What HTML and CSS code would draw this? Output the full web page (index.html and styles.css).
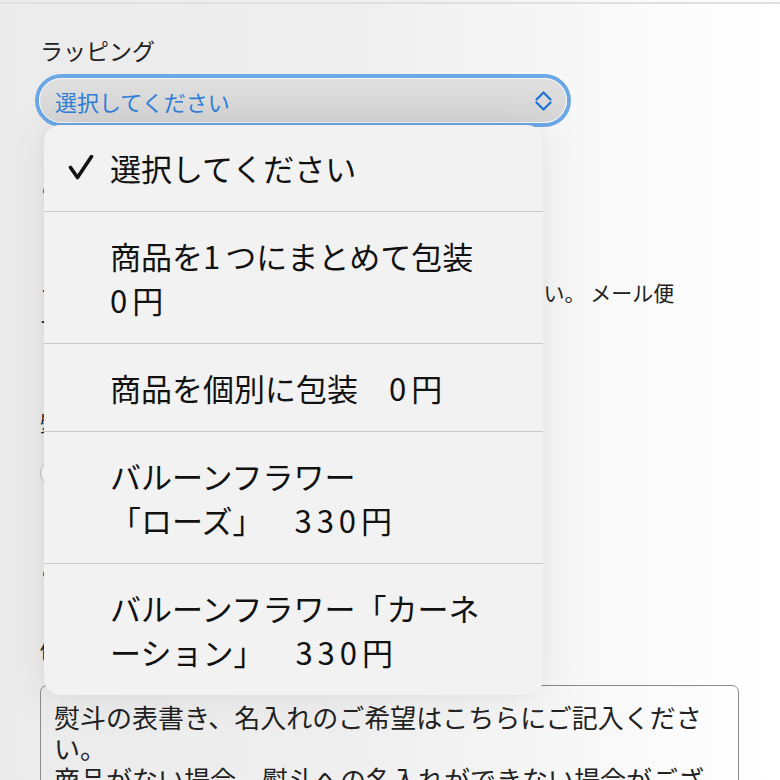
FILE: index.html
```html
<!DOCTYPE html>
<html lang="ja">
<head>
<meta charset="utf-8">
<title>ラッピング</title>
<link rel="stylesheet" href="styles.css">
</head>
<body>
<div class="topline"></div>
<main class="form">
  <div class="field-label l-wrap">ラッピング</div>
  <div class="select-wrap">
    <div class="select">
      <span class="select-value">選択してください</span>
      <svg class="chev" width="17" height="20" viewBox="0 0 17 20" aria-hidden="true">
        <polyline points="1.5,8.5 8.5,1.5 15.5,8.5" />
        <polyline points="1.5,11.5 8.5,18.5 15.5,11.5" />
      </svg>
    </div>
    <ul class="menu">
      <li class="opt">
        <span class="check"><svg width="26" height="26" viewBox="0 0 26 26" aria-hidden="true"><path d="M2.5 12.5 L9.5 22.5 L23.5 1.5" /></svg></span>
        <span class="opt-text">選択してください</span>
      </li>
      <li class="opt">
        <span class="check"></span>
        <span class="opt-text"><span class="ln">商品を<span class="num">1</span>つにまとめて包装</span><span class="ln"><span class="num">0</span>円</span></span>
      </li>
      <li class="opt">
        <span class="check"></span>
        <span class="opt-text"><span class="ln">商品を個別に包装　<span class="num">0</span>円</span></span>
      </li>
      <li class="opt">
        <span class="check"></span>
        <span class="opt-text"><span class="ln">バルーンフラワー</span><span class="ln">「ローズ」　<span class="num">330</span>円</span></span>
      </li>
      <li class="opt">
        <span class="check"></span>
        <span class="opt-text"><span class="ln">バルーンフラワー「カーネ</span><span class="ln">ーション」　<span class="num">330</span>円</span></span>
      </li>
    </ul>
  </div>
  <div class="field-label l-note">ご希望のラッピング</div>
  <p class="notice"><span class="ln">ラッピングをご希望の場合は、下記よりお選びください。 メール便</span><span class="ln">ではラッピングできません。</span></p>
  <div class="field-label l-noshi">熨斗</div>
  <div class="radio-row"><span class="radio"></span><span>なし</span></div>
  <div class="field-label l-caution">ご注意</div>
  <div class="field-label l-memo">備考</div>
  <div class="memo" role="textbox" aria-multiline="true">熨斗の表書き、名入れのご希望はこちらにご記入ください。
商品がない場合、熨斗への名入れができない場合がございます。</div>
</main>
</body>
</html>
```
FILE: styles.css
```css
html, body {
  margin: 0;
  padding: 0;
  overflow: hidden;
  height: 100%;
}
body {
  font-family: "Noto Sans CJK JP", "Noto Sans", sans-serif;
  color: #222;
  background: linear-gradient(90deg, #ebebeb 0%, #efefef 45%, #f6f6f6 70%, #fdfdfd 92%, #ffffff 100%);
  padding-top: 2px;
  box-sizing: border-box;
  text-spacing-trim: space-all;
}
.topline {
  height: 2px;
  background: #e0e0e0;
}
.form {
  padding: 0 41px 0 40px;
  display: flex;
  flex-direction: column;
  align-items: flex-start;
}
.field-label {
  font-size: 21px;
  line-height: 30px;
  color: #222;
}
.l-wrap {
  margin-top: 31px;
  font-size: 23px;
}
.select-wrap {
  position: relative;
  margin-top: 13px;
  margin-left: -1px;
}
.select {
  width: 528px;
  height: 45px;
  box-sizing: border-box;
  border-radius: 23px;
  border: 1.5px solid #f7f7f7;
  background: linear-gradient(180deg, #dfdfdf 0%, #d6d6d6 100%);
  box-shadow: 0 0 0 4px #6ca8e6;
  display: flex;
  align-items: center;
  justify-content: space-between;
  padding: 0 14px 0 15px;
}
.select-value {
  font-size: 22px;
  line-height: 30px;
  color: #2f7fd8;
}
.chev {
  display: block;
}
.chev polyline {
  fill: none;
  stroke: #1d72d6;
  stroke-width: 2.2;
  stroke-linecap: round;
  stroke-linejoin: round;
}
.menu {
  position: absolute;
  top: calc(100% + 2px);
  left: 5px;
  width: 499px;
  margin: 0;
  padding: 0;
  list-style: none;
  background: #f2f2f2;
  border-radius: 16px;
  box-shadow: 0 0 50px rgba(0, 0, 0, 0.07), 0 0 12px rgba(0, 0, 0, 0.04);
  z-index: 10;
  overflow: hidden;
}
.opt {
  display: grid;
  grid-template-columns: 42px 1fr;
  align-items: center;
  padding: 22px 0 21px 24px;
  border-top: 1px solid #c9c9c9;
  font-size: 31px;
  line-height: 44px;
  color: #111;
}
.opt:first-child {
  border-top: none;
  padding-top: 21px;
}
.check {
  display: flex;
  align-items: center;
  height: 44px;
}
.check svg path {
  fill: none;
  stroke: #111;
  stroke-width: 3.6;
  stroke-linecap: round;
  stroke-linejoin: round;
}
.opt-text {
  display: flex;
  flex-direction: column;
}
.ln {
  display: block;
  white-space: nowrap;
}
.num {
  letter-spacing: 5px;
}
.l-note {
  margin-top: 47px;
}
.notice {
  margin: 75px 0 0;
  font-size: 21px;
  line-height: 34px;
  color: #222;
}
.l-noshi {
  margin-top: 64px;
}
.radio-row {
  margin-top: 24px;
  display: flex;
  align-items: center;
  gap: 10px;
  font-size: 21px;
  line-height: 24px;
}
.radio {
  width: 22px;
  height: 22px;
  border: 1px solid #bdbdbd;
  border-radius: 50%;
  background: #fafafa;
}
.l-caution {
  margin-top: 68px;
}
.l-memo {
  margin-top: 51px;
}
.memo {
  margin-top: 21px;
  width: 699px;
  height: 200px;
  box-sizing: border-box;
  border: 1.5px solid #8a8a8a;
  border-radius: 7px;
  padding: 15px 12px 15px 13px;
  font-size: 26px;
  line-height: 31px;
  color: #222;
  white-space: pre-wrap;
  overflow: hidden;
}
```
